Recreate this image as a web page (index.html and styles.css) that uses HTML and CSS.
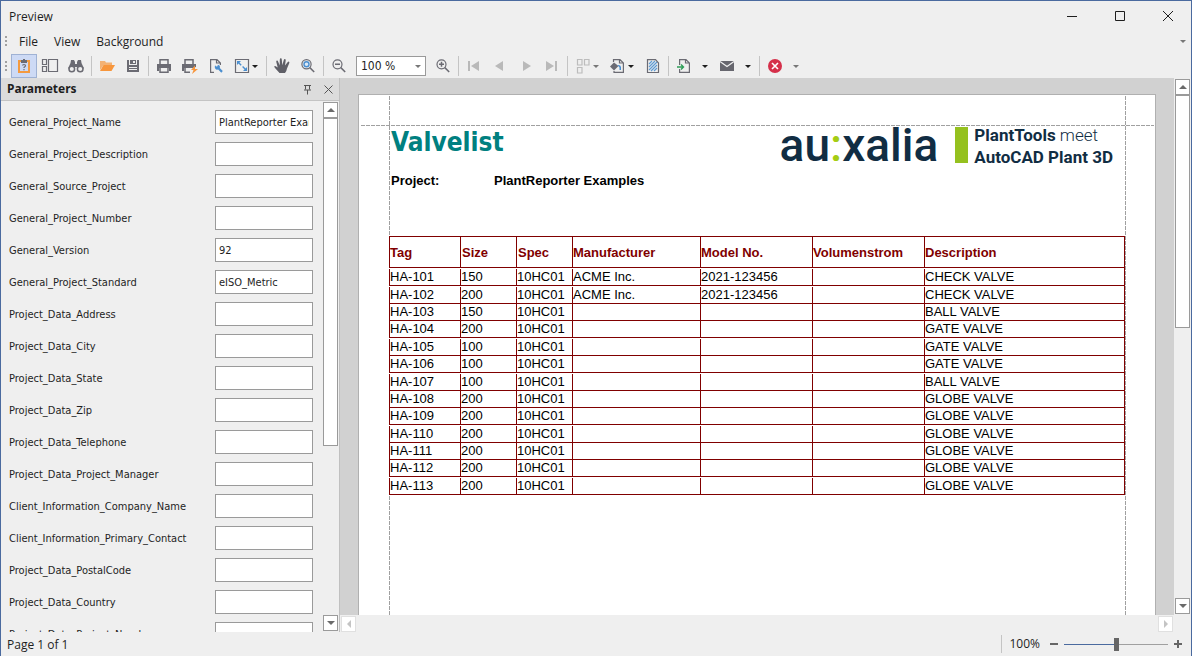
FILE: index.html
```
<!DOCTYPE html>
<html lang="en">
<head>
<meta charset="utf-8">
<title>Preview</title>
<link rel="stylesheet" href="styles.css">
</head>
<body>
<div class="window">
  <header class="titlebar">
    <h1 class="title">Preview</h1>
    <button class="win-btn" aria-label="Minimize"><svg width="12" height="12" viewBox="0 0 12 12"><path d="M1 6.500h10" class="ink"/></svg></button>
    <button class="win-btn" aria-label="Maximize"><svg width="12" height="12" viewBox="0 0 12 12"><path d="M1.500 1.500h9v9h-9z" class="ink"/></svg></button>
    <button class="win-btn" aria-label="Close"><svg width="12" height="12" viewBox="0 0 12 12"><path d="M1 1l10 10M11 1L1 11" class="ink"/></svg></button>
  </header>

  <nav class="menubar">
    <span class="grip"></span>
    <button class="menu">File</button>
    <button class="menu">View</button>
    <button class="menu">Background</button>
    <button class="menu-more" aria-label="More"><span class="arrow dim"></span></button>
  </nav>

  <div class="toolbar">
    <span class="grip"></span>
    <button class="tool active" aria-label="Parameters"><svg class="ico" viewBox="0 0 18 18"><path d="M3 3h3v2H5v9h8V5h-1V3h3v13H3z" fill="#f39a40"/><path d="M6 3h2V2h2v1h2v3H6z" fill="#6b6b73"/><path d="M7.500 8.500q0-1 1.500-1t1.500 1.200q0 .8-1.400 1.600v.8M9 12v1.200" fill="none" stroke="#6b6b73" stroke-width="1.200"/></svg></button>
    <button class="tool" aria-label="Thumbnails"><svg class="ico" viewBox="0 0 18 18"><path d="M1.500 2.500h4v5h-4zM1.500 9.500h4v5h-4zM7.500 2.500h9v12h-9z" class="line"/></svg></button>
    <button class="tool" aria-label="Find"><svg class="ico" viewBox="0 0 18 18"><path d="M4 3h3l1 2v2h2V5l1-2h3l.5 3 2.500 5.500h-6.500V10h-3v1.500H1L3.500 6z" fill="#6b6b73"/><circle cx="4.800" cy="12" r="2.800" fill="#efefef" stroke="#6b6b73" stroke-width="1.500"/><circle cx="13.200" cy="12" r="2.800" fill="#efefef" stroke="#6b6b73" stroke-width="1.500"/></svg></button>
    <span class="sep"></span>
    <button class="tool" aria-label="Open"><svg class="ico" viewBox="0 0 18 18"><path d="M2 13V4h5l1 1.500h6V8H5.500z" fill="#f3b274"/><path d="M5.500 8H17l-3.500 6H2z" fill="#f7963c"/></svg></button>
    <button class="tool" aria-label="Save"><svg class="ico" viewBox="0 0 18 18"><path d="M3 3h2v5h8V3h2v12H3zM5 10v3h8v-3z" fill="#6b6b73" fill-rule="evenodd"/><path d="M6 3h6v4H6zM9 4v2h2V4z" fill="#6b6b73" fill-rule="evenodd"/><path d="M5 11.500h8" stroke="#6b6b73"/></svg></button>
    <span class="sep"></span>
    <button class="tool" aria-label="Print"><svg class="ico" viewBox="0 0 18 18"><path d="M5 7V2.700h8V7" class="line wide"/><path d="M2 7h14v7h-2v-3H4v3H2z" fill="#6b6b73"/><path d="M5 11v4.300h8V11" class="line wide"/></svg></button>
    <button class="tool" aria-label="Quick print"><svg class="ico" viewBox="0 0 18 18"><path d="M4 7V2.700h8V7" class="line wide"/><path d="M1 7h14v3l-3 1H3v3H1z" fill="#6b6b73"/><path d="M4 11v4.300h5" class="line wide"/><path d="M14 8.500l-4 4.500h2.500L11 17l6-5h-3z" fill="#f7963c"/></svg></button>
    <button class="tool" aria-label="Page setup"><svg class="ico" viewBox="0 0 18 18"><path d="M7 15.400H3.600V2.600H10L13.400 6v2M9.500 2.600V6H13" class="line"/><path d="M8 8.200l1.200 1.400 1.300-.3.300-1.500c1.800.2 2.600 1.700 2 3.200l3 3-1.500 1.700-3.100-3.100c-2.200.7-4.100-1-3.200-4.400z" fill="#4b8fd0"/></svg></button>
    <button class="tool drop" aria-label="Scale"><svg class="ico" viewBox="0 0 18 18"><path d="M2.500 2.500h13v13h-13z" class="line"/><path d="M5 5l8 8" stroke="#4b8fd0" stroke-width="1.400" stroke-dasharray="4.500 2"/><path d="M4 4h4L4 8zM14 14h-4l4-4z" fill="#4b8fd0"/></svg><span class="arrow"></span></button>
    <span class="sep"></span>
    <button class="tool" aria-label="Hand tool"><svg class="ico" viewBox="0 0 18 18"><path d="M6.500 16L2 11Q.6 9.500 1.700 9q1-.3 3 1.500L3.300 5q-.3-1.400.6-1.500.9-.1 1.300 1.200L6.700 8.500 6.800 2.700Q6.800 1.300 7.800 1.300t1 1.400L9.300 8.200l1.500-5.200Q11.200 1.800 12 2t.7 1.500L12 8.600l2.600-3.400q.8-1 1.400-.5.700.4.200 1.500L14 11.500Q13.500 14.500 12 16z" fill="#5f5f67"/></svg></button>
    <button class="tool" aria-label="Magnifier"><svg class="ico" viewBox="0 0 18 18"><circle cx="7.500" cy="7.300" r="4.600" class="line"/><circle cx="7.500" cy="7.300" r="2.500" fill="#dce9f6" stroke="#4b8fd0" stroke-width="1.400"/><path d="M10.800 10.600l4.400 4.400" class="line wide"/></svg></button>
    <span class="sep"></span>
    <button class="tool" aria-label="Zoom out"><svg class="ico" viewBox="0 0 18 18"><circle cx="7.500" cy="7.300" r="4.500" class="line"/><path d="M5 7.300h5M10.800 10.600l4.400 4.400" class="line wide"/></svg></button>
    <span class="combo"><select aria-label="Zoom"><option>100 %</option></select><span class="arrow dim"></span></span>
    <button class="tool" aria-label="Zoom in"><svg class="ico" viewBox="0 0 18 18"><circle cx="7.500" cy="7.300" r="4.500" class="line"/><path d="M5 7.300h5M7.500 4.800v5M10.800 10.600l4.400 4.400" class="line wide"/></svg></button>
    <span class="sep"></span>
    <button class="tool" aria-label="First page"><svg class="ico" viewBox="0 0 18 18"><path d="M3 4h2v10H3zM14 4v10L6 9z" class="off"/></svg></button>
    <button class="tool" aria-label="Previous page"><svg class="ico" viewBox="0 0 18 18"><path d="M12 4v10L4 9z" class="off"/></svg></button>
    <button class="tool" aria-label="Next page"><svg class="ico" viewBox="0 0 18 18"><path d="M6 4v10l8-5z" class="off"/></svg></button>
    <button class="tool" aria-label="Last page"><svg class="ico" viewBox="0 0 18 18"><path d="M12 4h2v10h-2zM3 4v10l8-5z" class="off"/></svg></button>
    <span class="sep"></span>
    <button class="tool drop" aria-label="Multiple pages"><svg class="ico" viewBox="0 0 18 18"><path d="M3.500 2.500h4.500v5.500H3.500zM10.500 2.500H15v5.500h-4.500zM3.500 10.500h4.500V16H3.500z" fill="none" stroke="#bcbcbc" stroke-width="1.200"/></svg><span class="arrow dim"></span></button>
    <button class="tool drop" aria-label="Page color"><svg class="ico" viewBox="0 0 18 18"><path d="M4.500 5V2.600h6.500L14.400 6v9.400H5V14M10.500 2.600V6H14" class="line"/><path d="M5 5.500L9.500 9 5 13.500 1 9.500z" fill="#6b6b73"/><path d="M8.500 8q3-.5 3.500 2v3h-1.500v-2.500z" fill="#4b8fd0"/></svg><span class="arrow"></span></button>
    <button class="tool" aria-label="Watermark"><svg class="ico" viewBox="0 0 18 18"><path d="M3.500 2.600h8L14.500 6v9.500h-11z" class="line"/><path d="M5 7l3-3M5 10l6-6M5 13l8-8M7 14l6-6M10 14l3-3" stroke="#5f9bd3" stroke-width="1.200"/></svg></button>
    <span class="sep"></span>
    <button class="tool drop far" aria-label="Export"><svg class="ico" viewBox="0 0 18 18"><path d="M4.600 8V2.600H11L14.400 6v9.400H4.600V12M10.500 2.600V6H14" class="line"/><path d="M2 10h6M6 7.500L8.500 10 6 12.500" fill="none" stroke="#2f9e58" stroke-width="1.400"/></svg><span class="arrow"></span></button>
    <button class="tool drop far" aria-label="E-mail"><svg class="ico" viewBox="0 0 18 18"><path d="M2 4h14v10H2z" fill="#66666e"/><path d="M2 4.500l7 5 7-5" fill="none" stroke="#efefef" stroke-width="1.200"/></svg><span class="arrow"></span></button>
    <span class="sep"></span>
    <button class="tool drop far" aria-label="Stop"><svg class="ico" viewBox="0 0 18 18"><circle cx="9" cy="9" r="7" fill="#d5304a"/><path d="M6 6l6 6M12 6l-6 6" stroke="#fff" stroke-width="1.600"/></svg><span class="arrow dim"></span></button>
  </div>

  <main class="work">
    <section class="panel">
      <div class="panel-head">
        <h2 class="panel-title">Parameters</h2>
        <button class="mini" aria-label="Pin"><svg width="9" height="11" viewBox="0 0 9 11"><path d="M1 1.500h7M2.500 1.500v4M6.500 1.500v4M1 6h7M4.500 6v4.500" fill="none" stroke="#555"/></svg></button>
        <button class="mini" aria-label="Close panel"><svg width="9" height="9" viewBox="0 0 9 9"><path d="M.5.5l8 8M8.500.5l-8 8" fill="none" stroke="#555"/></svg></button>
      </div>
      <div class="panel-body">
        <form class="params">
          <div class="param"><label for="p1">General_Project_Name</label><input id="p1" value="PlantReporter Examples"></div>
          <div class="param"><label for="p2">General_Project_Description</label><input id="p2"></div>
          <div class="param"><label for="p3">General_Source_Project</label><input id="p3"></div>
          <div class="param"><label for="p4">General_Project_Number</label><input id="p4"></div>
          <div class="param"><label for="p5">General_Version</label><input id="p5" value="92"></div>
          <div class="param"><label for="p6">General_Project_Standard</label><input id="p6" value="eISO_Metric"></div>
          <div class="param"><label for="p7">Project_Data_Address</label><input id="p7"></div>
          <div class="param"><label for="p8">Project_Data_City</label><input id="p8"></div>
          <div class="param"><label for="p9">Project_Data_State</label><input id="p9"></div>
          <div class="param"><label for="p10">Project_Data_Zip</label><input id="p10"></div>
          <div class="param"><label for="p11">Project_Data_Telephone</label><input id="p11"></div>
          <div class="param"><label for="p12">Project_Data_Project_Manager</label><input id="p12"></div>
          <div class="param"><label for="p13">Client_Information_Company_Name</label><input id="p13"></div>
          <div class="param"><label for="p14">Client_Information_Primary_Contact</label><input id="p14"></div>
          <div class="param"><label for="p15">Project_Data_PostalCode</label><input id="p15"></div>
          <div class="param"><label for="p16">Project_Data_Country</label><input id="p16"></div>
          <div class="param"><label for="p17">Project_Data_Project_Number</label><input id="p17"></div>
        </form>
        <div class="vscroll">
          <button class="sbtn" aria-label="Scroll up"><span class="tri up"></span></button>
          <div class="thumb params-thumb"></div>
          <button class="sbtn end" aria-label="Scroll down"><span class="tri down"></span></button>
        </div>
      </div>
    </section>

    <section class="viewer">
      <div class="canvas">
        <article class="page">
          <span class="guide left"></span><span class="guide right"></span><span class="guide top"></span>
          <div class="report-head">
            <h3 class="report-title">Valvelist</h3>
            <div class="brand">
              <span class="brand-name">au<b>:</b>xalia</span>
              <span class="brand-bar"></span>
              <span class="brand-tag"><strong>PlantTools</strong> meet<br><strong>AutoCAD Plant 3D</strong></span>
            </div>
          </div>
          <div class="project"><span class="project-label">Project:</span><span>PlantReporter Examples</span></div>
          <table class="valves">
            <colgroup><col class="c-tag"><col class="c-s"><col class="c-s"><col class="c-man"><col class="c-m"><col class="c-m"><col></colgroup>
            <thead><tr><th>Tag</th><th>Size</th><th>Spec</th><th>Manufacturer</th><th>Model No.</th><th>Volumenstrom</th><th>Description</th></tr></thead>
            <tbody>
              <tr class="tall"><td>HA-101</td><td>150</td><td>10HC01</td><td>ACME Inc.</td><td>2021-123456</td><td></td><td>CHECK VALVE</td></tr>
              <tr class="tall"><td>HA-102</td><td>200</td><td>10HC01</td><td>ACME Inc.</td><td>2021-123456</td><td></td><td>CHECK VALVE</td></tr>
              <tr><td>HA-103</td><td>150</td><td>10HC01</td><td></td><td></td><td></td><td>BALL VALVE</td></tr>
              <tr><td>HA-104</td><td>200</td><td>10HC01</td><td></td><td></td><td></td><td>GATE VALVE</td></tr>
              <tr class="tall"><td>HA-105</td><td>100</td><td>10HC01</td><td></td><td></td><td></td><td>GATE VALVE</td></tr>
              <tr><td>HA-106</td><td>100</td><td>10HC01</td><td></td><td></td><td></td><td>GATE VALVE</td></tr>
              <tr class="tall"><td>HA-107</td><td>100</td><td>10HC01</td><td></td><td></td><td></td><td>BALL VALVE</td></tr>
              <tr><td>HA-108</td><td>200</td><td>10HC01</td><td></td><td></td><td></td><td>GLOBE VALVE</td></tr>
              <tr><td>HA-109</td><td>200</td><td>10HC01</td><td></td><td></td><td></td><td>GLOBE VALVE</td></tr>
              <tr class="tall"><td>HA-110</td><td>200</td><td>10HC01</td><td></td><td></td><td></td><td>GLOBE VALVE</td></tr>
              <tr><td>HA-111</td><td>200</td><td>10HC01</td><td></td><td></td><td></td><td>GLOBE VALVE</td></tr>
              <tr><td>HA-112</td><td>200</td><td>10HC01</td><td></td><td></td><td></td><td>GLOBE VALVE</td></tr>
              <tr class="tall"><td>HA-113</td><td>200</td><td>10HC01</td><td></td><td></td><td></td><td>GLOBE VALVE</td></tr>
            </tbody>
          </table>
        </article>
      </div>
      <div class="vscroll page-scroll">
        <button class="sbtn" aria-label="Scroll up"><span class="tri up"></span></button>
        <div class="thumb page-thumb"></div>
        <button class="sbtn end" aria-label="Scroll down"><span class="tri down"></span></button>
      </div>
      <div class="hscroll">
        <button class="sbtn faint" aria-label="Scroll left"><span class="tri prev"></span></button>
        <button class="sbtn faint" aria-label="Scroll right"><span class="tri next"></span></button>
      </div>
    </section>
  </main>

  <footer class="status">
    <span class="page-no">Page 1 of 1</span>
    <span class="zoom-label">100%</span>
    <button class="step" aria-label="Zoom out"><svg width="10" height="10" viewBox="0 0 10 10"><path d="M1 5h8" stroke="#666" stroke-width="2"/></svg></button>
    <input class="slider" type="range" min="0" max="100" value="50" aria-label="Zoom level">
    <button class="step" aria-label="Zoom in"><svg width="10" height="10" viewBox="0 0 10 10"><path d="M1 5h8M5 1v8" stroke="#666" stroke-width="2"/></svg></button>
  </footer>
</div>
</body>
</html>
```
FILE: styles.css
```
* { box-sizing: border-box; }
body { margin: 0; font-family: "Open Sans", "Noto Sans", sans-serif; font-size: 12px; color: #1e1e1e; background: #efefef; }
button { appearance: none; border: 0; padding: 0; margin: 0; background: none; font: inherit; color: inherit; }
h1, h2, h3 { margin: 0; font-weight: normal; }

.window { height: 100vh; display: flex; flex-direction: column; border: 1px solid #4a6a9f; border-bottom: 0; overflow: hidden; }

.titlebar { display: flex; align-items: center; height: 30px; padding-left: 8px; flex: none; }
.title { flex: 1; font-size: 12px; }
.win-btn { width: 48px; height: 30px; padding-left: 2px; display: flex; align-items: center; justify-content: center; }
.ink { fill: none; stroke: #1e1e1e; stroke-width: 1; }

.menubar { display: flex; align-items: center; height: 21px; padding-left: 4px; flex: none; }
.grip { width: 2px; height: 11px; flex: none; background: repeating-linear-gradient(#a0a0a0 0 2px, transparent 2px 4px); }
.menu { padding: 0 0 0 12px; margin-right: 4px; }
.menu-more { margin-left: auto; padding-right: 5px; display: flex; }
.arrow { width: 0; height: 0; flex: none; border: 3px solid transparent; border-top-color: #1e1e1e; border-bottom: 0; }
.arrow.dim { border-top-color: #777; }

.toolbar { display: flex; align-items: center; height: 26px; padding: 2px 0 0 4px; flex: none; }
.toolbar .grip { margin-right: 4px; }
.tool { width: 26px; height: 24px; padding: 3px 4px; display: flex; align-items: center; flex: none; }
.tool.active { background: #cddaf5; box-shadow: inset 0 0 0 1px #9fb2d4; }
.tool.drop { width: 35px; gap: 1px; }
.tool.drop.far { width: 43px; gap: 9px; }
.ico { width: 18px; height: 18px; flex: none; }
.line { fill: none; stroke: #6b6b73; stroke-width: 1.2; }
.line.wide { stroke-width: 1.5; }
.off { fill: #b9b9b9; }
.sep { width: 1px; height: 20px; margin: 0 2px; background: #c4c4c4; flex: none; }
.combo { position: relative; margin: 0 4px; width: 70px; height: 20px; flex: none; }
.combo select { appearance: none; width: 100%; height: 100%; border: 1px solid #9a9a9a; border-radius: 0; background: #fff; padding: 0 4px; font: 12px "DejaVu Sans Condensed", "DejaVu Sans", sans-serif; color: #1e1e1e; }
.combo .arrow { position: absolute; right: 5px; top: 9px; }

.work { flex: 1; display: flex; min-height: 0; }
.panel { width: 339px; flex: none; display: flex; flex-direction: column; border-right: 1px solid #c0c0c0; }
.panel-head { display: flex; align-items: center; height: 23px; padding: 0 6px; background: #dcdcdc; border-bottom: 1px solid #c4c4c4; flex: none; }
.panel-title { flex: 1; font: bold 12px/20px "Noto Sans", sans-serif; padding-bottom: 1px; }
.mini { width: 21px; display: flex; justify-content: center; }
.mini:last-child { width: 10px; margin-left: 5px; }
.panel-body { flex: 1; display: flex; min-height: 0; }
.params { flex: 1; padding: 9px 10px 0 8px; overflow: hidden; }
.param { display: flex; align-items: center; justify-content: space-between; height: 24px; margin-bottom: 8px; font: 11px "DejaVu Sans Condensed", "DejaVu Sans", sans-serif; }
.param input { width: 98px; height: 24px; border: 1px solid #9a9a9a; border-radius: 0; padding: 0 3px; background: #fff; font: inherit; color: #1e1e1e; }

.vscroll { width: 16px; display: flex; flex-direction: column; flex: none; padding: 1px 1px 1px 0; }
.sbtn { width: 15px; height: 16px; flex: none; background: #fff; border: 1px solid #9a9a9a; display: flex; align-items: center; justify-content: center; }
.sbtn.end { margin-top: auto; }
.sbtn.faint { border-color: #e0e0e0; }
.thumb { width: 15px; background: #fff; border: 1px solid #9a9a9a; }
.params-thumb { height: 62%; }
.page-thumb { height: 43.5%; }
.tri { width: 0; height: 0; border: 4px solid transparent; }
.tri.up { border-bottom-color: #6a6a6a; border-top: 0; }
.tri.down { border-top-color: #6a6a6a; border-bottom: 0; }
.tri.prev { border-right-color: #c4c4c4; border-left: 0; }
.tri.next { border-left-color: #c4c4c4; border-right: 0; }

.viewer { flex: 1; min-width: 0; display: grid; grid-template: 1fr 17px / 1fr 17px; }
.canvas { background: #d1d1d1; padding: 16px 18px 0; overflow: hidden; display: flex; }
.page-scroll { width: 17px; padding-left: 1px; }
.hscroll { display: flex; justify-content: space-between; padding: 1px; }

.page { position: relative; flex: 1; background: #fff; border: 1px solid #b0b0b0; border-bottom: 0; padding: 31px 30px 0; }
.guide { position: absolute; }
.guide.left, .guide.right { top: 1px; bottom: 0; width: 1px; background: repeating-linear-gradient(#a0a0a0 0 4px, transparent 4px 5px); }
.guide.left { left: 30px; }
.guide.right { right: 29px; }
.guide.top { top: 30px; left: 2px; right: 1px; height: 1px; background: repeating-linear-gradient(90deg, #a0a0a0 0 4px, transparent 4px 5px); }
.report-head { display: flex; justify-content: space-between; height: 40px; padding-left: 2px; }
.report-title { font: bold 26px/32px "DejaVu Sans Condensed", "DejaVu Sans", sans-serif; color: #008080; }
.brand { display: flex; color: #112d43; font-family: Roboto, sans-serif; height: 36px; margin-right: 12px; }
.brand-name { font-size: 46px; line-height: 38px; font-weight: 500; }
.brand-name b { font-weight: 500; color: #a5cd14; }
.brand-bar { width: 13px; height: 36px; margin: 1px 6px 0 17px; background: #95c11f; }
.brand-tag { font-size: 17px; line-height: 22px; margin-top: -2px; white-space: nowrap; font-weight: 300; }
.brand-tag strong { font-weight: 700; }
.project { display: flex; height: 70px; padding: 6px 0 0 2px; font: bold 13px/18px "Liberation Sans", Arial, sans-serif; color: #000; }
.project-label { width: 103px; }

.valves { position: relative; width: 100%; table-layout: fixed; border-collapse: separate; border-spacing: 0; border-top: 1px solid #800000; border-right: 1px solid #800000; font: 13px/16px "Liberation Sans", Arial, sans-serif; color: #000; background: #fff; }
.valves th, .valves td { position: relative; padding: 0; height: 17px; text-align: left; border-left: 1px solid #800000; border-bottom: 1px solid #800000; white-space: nowrap; }
.valves th { height: 31px; padding-top: 2px; color: #800000; }
.valves th:nth-child(2), .valves th:nth-child(3) { padding-left: 1px; }
.valves .tall td { height: 18px; }
.valves .tall td::before { content: ""; position: absolute; left: -1px; top: 0; width: 1px; height: 1px; background: #fff; }
.c-tag { width: 71px; }
.c-s { width: 56px; }
.c-man { width: 128px; }
.c-m { width: 112px; }

.status { height: 24px; flex: none; display: flex; align-items: center; padding: 0 8px 0 6px; }
.page-no { flex: 1; }
.zoom-label { border-left: 1px solid #c4c4c4; padding-left: 7px; line-height: 18px; margin-right: 9px; }
.step { width: 10px; height: 10px; display: flex; }
.slider { appearance: none; width: 104px; height: 15px; margin: 0 5px; background: linear-gradient(90deg, #4a6a9f 50%, #a0a0a0 50%) center / 100% 1px no-repeat; }
.slider::-webkit-slider-thumb { appearance: none; width: 5px; height: 13px; background: #666; }
```
